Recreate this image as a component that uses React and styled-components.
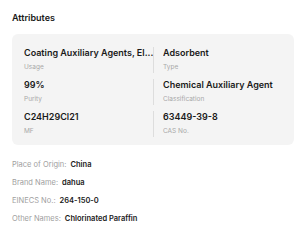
import React from "react"
import styled, { createGlobalStyle } from "styled-components"

const GlobalStyle = createGlobalStyle`
  html, body {
    margin: 0;
    padding: 0;
    background: #ffffff;
    font-family: Inter, "Noto Sans", sans-serif;
    color: #222222;
  }
`

const attributes = [
  { value: "Coating Auxiliary Agents, El...", label: "Usage" },
  { value: "Adsorbent", label: "Type" },
  { value: "99%", label: "Purity" },
  { value: "Chemical Auxiliary Agent", label: "Classification" },
  { value: "C24H29Cl21", label: "MF" },
  { value: "63449-39-8", label: "CAS No." },
]

const details = [
  { label: "Place of Origin:", value: "China" },
  { label: "Brand Name:", value: "dahua" },
  { label: "EINECS No.:", value: "264-150-0" },
  { label: "Other Names:", value: "Chlorinated Paraffin" },
]

const App = () => {
  return (
    <Page>
      <GlobalStyle />
      <Title>Attributes</Title>
      <AttrBox>
        {attributes.map((item, index) => (
          <AttrItem key={index} right={index % 2 === 1}>
            <AttrValue>{item.value}</AttrValue>
            <AttrLabel>{item.label}</AttrLabel>
          </AttrItem>
        ))}
      </AttrBox>
      <DetailList>
        {details.map((item, index) => (
          <DetailRow key={index}>
            <DetailLabel>{item.label}</DetailLabel>
            <DetailValue>{item.value}</DetailValue>
          </DetailRow>
        ))}
      </DetailList>
    </Page>
  )
}

export default App

const Page = styled.div`
  width: 300px;
  height: 251px;
  box-sizing: border-box;
  padding: 12px 6px 0 12px;
`

const Title = styled.div`
  font-size: 9px;
  font-weight: 600;
  line-height: 12px;
  color: #1a1a1a;
`

const AttrBox = styled.div`
  margin-top: 10px;
  background: #f4f4f4;
  border-radius: 6px;
  padding: 13px 12px 8px 12px;
  display: grid;
  grid-template-columns: 1fr 1fr;
  row-gap: 6px;
`

const AttrItem = styled.div`
  min-width: 0;
  padding-left: ${(p) => (p.right ? "9px" : "0")};
  border-left: ${(p) => (p.right ? "1px solid #dddddd" : "none")};
`

const AttrValue = styled.div`
  font-size: 9px;
  font-weight: 600;
  line-height: 12px;
  color: #1a1a1a;
  white-space: nowrap;
  overflow: hidden;
`

const AttrLabel = styled.div`
  margin-top: 2px;
  font-size: 6.5px;
  line-height: 12px;
  color: #a8a8a8;
`

const DetailList = styled.div`
  margin-top: 14px;
  display: flex;
  flex-direction: column;
  gap: 6px;
`

const DetailRow = styled.div`
  display: flex;
  align-items: baseline;
  gap: 4px;
  line-height: 12px;
`

const DetailLabel = styled.span`
  font-size: 7.5px;
  color: #a0a0a0;
`

const DetailValue = styled.span`
  font-size: 7.5px;
  font-weight: 600;
  color: #1a1a1a;
`
